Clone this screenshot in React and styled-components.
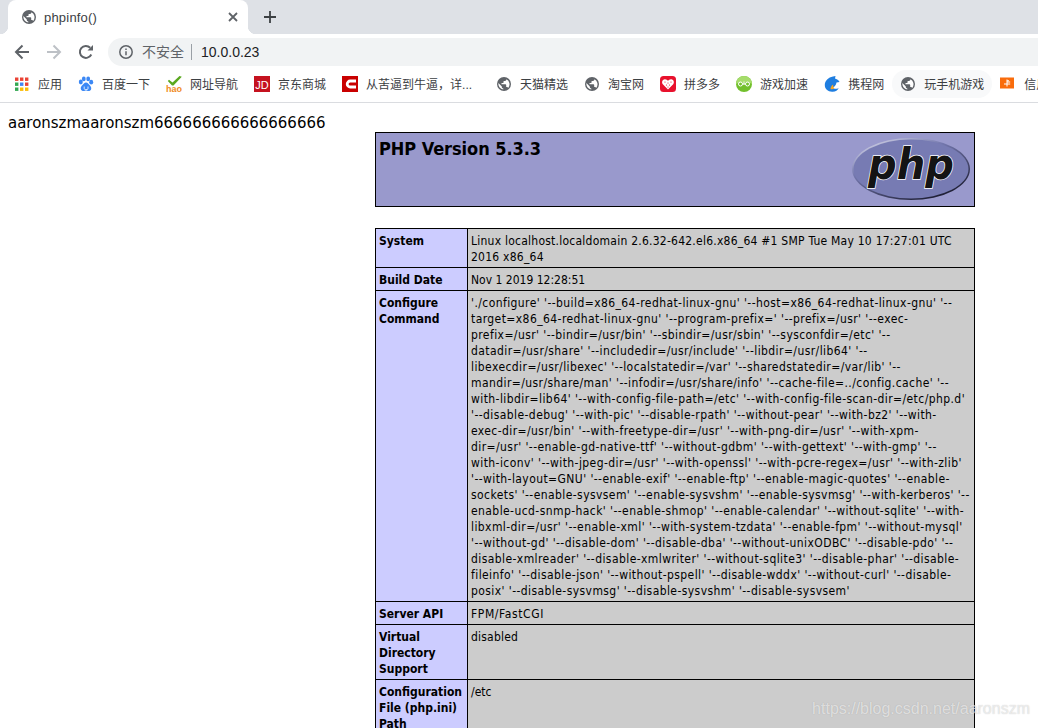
import React from "react";
import styled, { createGlobalStyle } from "styled-components";

const Global = createGlobalStyle`
  html, body { margin: 0; padding: 0; background: #fff; }
  * { box-sizing: border-box; }
`;

const Window = styled.div`
  position: relative;
  width: 1038px;
  height: 728px;
  overflow: hidden;
  background: #fff;
  font-family: "Liberation Sans", "Noto Sans CJK SC", sans-serif;
`;

const TabStrip = styled.div`
  display: flex;
  align-items: flex-start;
  height: 34px;
  padding-left: 8px;
  background: #dee1e6;
`;

const Tab = styled.div`
  position: relative;
  display: flex;
  align-items: center;
  width: 240px;
  height: 34px;
  padding: 0 9px 0 13px;
  background: #fff;
  border-radius: 8px 8px 0 0;
  &::before, &::after {
    content: "";
    position: absolute;
    bottom: 0;
    width: 8px;
    height: 8px;
  }
  &::before { left: -8px; background: radial-gradient(circle at 0 0, transparent 8px, #fff 8.5px); }
  &::after { right: -8px; background: radial-gradient(circle at 100% 0, transparent 8px, #fff 8.5px); }
`;

const TabTitle = styled.span`
  flex: 1;
  margin-left: 7px;
  font-size: 13px;
  letter-spacing: 0.2px;
  color: #3c4043;
`;

const NewTab = styled.div`
  display: flex;
  margin: 9px 0 0 14px;
`;

const Toolbar = styled.div`
  display: flex;
  align-items: flex-end;
  height: 32px;
  padding-left: 14px;
`;

const NavButton = styled.div`
  display: flex;
  align-items: center;
  justify-content: center;
  width: 16px;
  height: 28px;
  margin-right: ${(p) => p.$gap}px;
`;

const Omnibox = styled.div`
  flex: 1;
  display: flex;
  align-items: center;
  height: 28px;
  padding-left: 10px;
  background: #f1f3f4;
  border-radius: 14px 0 0 14px;
`;

const Insecure = styled.span`
  margin-left: 8px;
  padding-bottom: 2px;
  font-size: 14px;
  color: #5f6368;
`;

const Divider = styled.span`
  width: 1px;
  height: 16px;
  margin: 0 9px 0 7px;
  background: #9aa0a6;
`;

const Url = styled.span`
  font-size: 14px;
  color: #202124;
`;

const BookmarkBar = styled.div`
  display: flex;
  align-items: center;
  height: 37px;
  padding-left: 6px;
  border-bottom: 1px solid #dadce0;
  white-space: nowrap;
`;

const Bookmark = styled.div`
  flex: none;
  display: flex;
  align-items: center;
  gap: 8px;
  height: 28px;
  padding: 0 8px;
  border-radius: 14px;
  background: ${(p) => (p.$hover ? "#f8f9fa" : "transparent")};
`;

const BookmarkLabel = styled.span`
  padding-bottom: 2px;
  font-size: 12px;
  color: #3c4043;
  ${(p) => (p.$width ? `width: ${p.$width}px; overflow: hidden;` : "")}
`;

const Content = styled.div`
  display: flex;
  align-items: flex-start;
`;

const Greeting = styled.div`
  flex: none;
  width: 375px;
  padding: 11px 0 0 8px;
  font-family: "DejaVu Sans Condensed", "DejaVu Sans", sans-serif;
  font-size: 16.65px;
  line-height: 18px;
  color: #000;
`;

const PhpInfo = styled.div`
  flex: none;
  width: 600px;
  padding-top: 29px;
  font-family: "DejaVu Sans Condensed", "DejaVu Sans", sans-serif;
  font-size: 12px;
  line-height: 16px;
  color: #000;
`;

const InfoTable = styled.table`
  width: 600px;
  table-layout: fixed;
  border-collapse: collapse;
  margin-bottom: ${(p) => p.$after || 0}px;
`;

const Banner = styled.td`
  height: 74px;
  padding: 0 3px;
  background: #9999cc;
  border: 1px solid #000;
  vertical-align: top;
`;

const BannerInner = styled.div`
  display: flex;
  justify-content: space-between;
`;

const Title = styled.h1`
  margin: 3px 0 0;
  font-size: 18px;
  line-height: 26px;
  font-weight: 700;
  letter-spacing: -0.06px;
`;

const LogoWrap = styled.div`
  display: flex;
  margin-top: 4px;
`;

const Label = styled.td`
  width: 92px;
  padding: 4px 3px 2px;
  background: #ccccff;
  border: 1px solid #000;
  font-weight: 700;
  vertical-align: top;
`;

const Value = styled.td`
  padding: 4px 3px 2px 3px;
  background: #cccccc;
  border: 1px solid #000;
  vertical-align: top;
  white-space: nowrap;
  overflow: hidden;
  letter-spacing: ${(p) => p.$track}px;
`;

const Watermark = styled.div`
  position: absolute;
  right: 8px;
  bottom: 9px;
  font-family: "Liberation Sans", sans-serif;
  font-size: 16px;
  line-height: 20px;
  color: rgba(255, 255, 255, 0.62);
  text-shadow: 0 0 1px rgba(120, 120, 120, 0.45);
`;

const Icon16 = ({ children, w = 16, h = 16 }) => (
  <svg width={w} height={h} viewBox="0 0 16 16" style={{ flex: "none", display: "block" }}>{children}</svg>
);

const Globe = ({ size = 16 }) => (
  <Icon16 w={size} h={size}>
    <circle cx="8" cy="8" r="7" fill="#5f6368" />
    <path d="M7.3 13.6A5.7 5.7 0 0 1 2.4 7L5.8 10.400v.7c0 .8.6 1.300 1.500 1.400z" fill="#fff" />
    <path d="M12.200 11.900c-.2-.5-.7-.9-1.300-.9h-.7V9c0-.4-.3-.7-.7-.7H5.500V7h1.400c.4 0 .7-.3.7-.7V4.900h1.400c.8 0 1.400-.6 1.400-1.400V3.200a5.700 5.700 0 0 1 1.800 8.700z" fill="#fff" />
  </Icon16>
);

const Apps = () => {
  const colors = ["#ea4335", "#ea4335", "#ea4335", "#34a853", "#4285f4", "#ea4335", "#34a853", "#fbbc05", "#fbbc05"];
  return (
    <Icon16>
      {colors.map((c, i) => (
        <rect key={i} x={1 + (i % 3) * 5} y={1.500 + Math.floor(i / 3) * 5} width="3.400" height="3.400" fill={c} />
      ))}
    </Icon16>
  );
};

const Baidu = () => (
  <Icon16>
    <g fill="#3b88f5">
      <ellipse cx="2.800" cy="6" rx="2" ry="2.400" />
      <ellipse cx="5.800" cy="2.900" rx="1.900" ry="2.300" />
      <ellipse cx="10.200" cy="2.900" rx="1.900" ry="2.300" />
      <ellipse cx="13.200" cy="6.200" rx="2" ry="2.400" />
      <path d="M8 6.500c-1.800 0-2.500 1.500-3.500 2.500S2.400 11 2.800 13c.4 1.800 2.400 2.300 3.600 1.900.6-.2 1-.3 1.600-.3s1 .1 1.600.3c1.300.4 3.200-.1 3.600-1.900.4-2-.8-3-1.700-4S9.800 6.500 8 6.500z" />
    </g>
    <path d="M6.200 10.500v2c0 .7.500 1 1 1h1.800c.6 0 1-.3 1-1v-2" fill="none" stroke="#fff" strokeWidth=".8" />
  </Icon16>
);

const Hao = () => (
  <Icon16>
    <path d="M3 3.800 6.500 6.500 13.500 0 15.800 .8 7.500 9.500 6 9.500 1.800 5z" fill="#5aa81f" />
    <text x="0" y="15.500" fontFamily="'Liberation Sans', sans-serif" fontSize="8.500" fontWeight="700" fill="#f08a24" textLength="16" lengthAdjust="spacingAndGlyphs">hao</text>
  </Icon16>
);

const JD = () => (
  <Icon16>
    <rect width="16" height="16" fill="#c5121f" />
    <text x="8" y="12.500" textAnchor="middle" fontFamily="'Liberation Sans', sans-serif" fontSize="11" fill="#fff">JD</text>
  </Icon16>
);

const Csdn = () => (
  <Icon16>
    <rect width="16" height="16" fill="#c90000" />
    <path d="M14 5H8.200a3 3 0 0 0 0 6h5.800" fill="none" stroke="#fff" strokeWidth="2.800" />
  </Icon16>
);

const Pdd = () => (
  <Icon16>
    <rect width="16" height="16" rx="3.500" fill="#e8112d" />
    <path d="M8 13.500 2.800 8.300C1.500 6.800 2 3.600 4.800 3.300 6.200 3.200 7.400 4 8 5c.6-1 1.800-1.800 3.200-1.700 2.800.3 3.300 3.500 2 5z" fill="#fff" />
    <g fill="#e8112d">
      <circle cx="5" cy="6" r=".6" /><circle cx="8" cy="7" r=".6" /><circle cx="11" cy="6" r=".6" />
      <circle cx="6.500" cy="9" r=".6" /><circle cx="9.500" cy="9" r=".6" /><circle cx="8" cy="11" r=".6" />
    </g>
  </Icon16>
);

const Game = () => (
  <Icon16>
    <circle cx="8" cy="8" r="8" fill="#72c02c" />
    <path d="M0 8a8 8 0 0 1 16 0c-2-2-13-2-16 0z" fill="#a5dc6b" />
    <g fill="none" stroke="#fff" strokeWidth="1">
      <circle cx="4.500" cy="8" r="2" /><circle cx="11.500" cy="8" r="2" />
      <path d="M6.500 8h3M8 5.500v3" />
    </g>
  </Icon16>
);

const Ctrip = () => (
  <Icon16>
    <path d="M9 .5 11.500 0 11 2.500c2.500 1 4 2 4.500 3.500l-3 .5c-.5 2.500-1.500 4-3.800 5 .8 1 1.800 1.400 4 1.200.8-.1 1.500-.4 2-1-.8 2.500-3.200 4-6 4C4 16 .8 13 .8 9c0-4 3.600-7.700 8.200-8.500z" fill="#1f7ee0" />
    <path d="M6.500 13c.2-2 1-3.500 2.700-4.500-.2 2 .3 3.200 1.300 4-1.500.8-2.800.9-4 .5z" fill="#f6a623" />
  </Icon16>
);

const Card = () => (
  <Icon16>
    <rect y="1.500" width="14" height="11" fill="#f96c0c" />
    <path d="M7 3.500v7M7 6h3.200M4 8h6.200M7 4.800h2" stroke="#fff" strokeWidth="1" fill="none" />
  </Icon16>
);

const PhpLogo = () => (
  <svg width="120" height="64" viewBox="0 0 120 64" style={{ display: "block" }}>
    <defs>
      <linearGradient id="rim" x1="0.150" y1="0" x2="0.850" y2="1">
        <stop offset="0" stopColor="#d8d9ea" />
        <stop offset="0.350" stopColor="#7377ad" />
        <stop offset="1" stopColor="#111122" />
      </linearGradient>
    </defs>
    <ellipse cx="60" cy="32" rx="59" ry="31" fill="url(#rim)" />
    <ellipse cx="60" cy="32" rx="57.500" ry="29.500" fill="#777bb3" />
    <text
      x="60"
      y="42"
      textAnchor="middle"
      fontFamily="'DejaVu Sans', sans-serif"
      fontSize="42"
      fontWeight="700"
      fontStyle="italic"
      fill="#141414"
      stroke="#fff"
      strokeWidth="1.500"
      paintOrder="stroke"
      textLength="86"
      lengthAdjust="spacingAndGlyphs"
    >
      php
    </text>
  </svg>
);

const BOOKMARKS = [
  { icon: <Apps />, label: "应用" },
  { icon: <Baidu />, label: "百度一下" },
  { icon: <Hao />, label: "网址导航" },
  { icon: <JD />, label: "京东商城" },
  { icon: <Csdn />, label: "从苦逼到牛逼，详...", width: 114 },
  { icon: <Globe />, label: "天猫精选" },
  { icon: <Globe />, label: "淘宝网" },
  { icon: <Pdd />, label: "拼多多" },
  { icon: <Game />, label: "游戏加速" },
  { icon: <Ctrip />, label: "携程网" },
  { icon: <Globe />, label: "玩手机游戏", hover: true },
  { icon: <Card />, label: "信用卡" },
];

const CONFIGURE = [
  "'./configure' '--build=x86_64-redhat-linux-gnu' '--host=x86_64-redhat-linux-gnu' '--",
  "target=x86_64-redhat-linux-gnu' '--program-prefix=' '--prefix=/usr' '--exec-",
  "prefix=/usr' '--bindir=/usr/bin' '--sbindir=/usr/sbin' '--sysconfdir=/etc' '--",
  "datadir=/usr/share' '--includedir=/usr/include' '--libdir=/usr/lib64' '--",
  "libexecdir=/usr/libexec' '--localstatedir=/var' '--sharedstatedir=/var/lib' '--",
  "mandir=/usr/share/man' '--infodir=/usr/share/info' '--cache-file=../config.cache' '--",
  "with-libdir=lib64' '--with-config-file-path=/etc' '--with-config-file-scan-dir=/etc/php.d'",
  "'--disable-debug' '--with-pic' '--disable-rpath' '--without-pear' '--with-bz2' '--with-",
  "exec-dir=/usr/bin' '--with-freetype-dir=/usr' '--with-png-dir=/usr' '--with-xpm-",
  "dir=/usr' '--enable-gd-native-ttf' '--without-gdbm' '--with-gettext' '--with-gmp' '--",
  "with-iconv' '--with-jpeg-dir=/usr' '--with-openssl' '--with-pcre-regex=/usr' '--with-zlib'",
  "'--with-layout=GNU' '--enable-exif' '--enable-ftp' '--enable-magic-quotes' '--enable-",
  "sockets' '--enable-sysvsem' '--enable-sysvshm' '--enable-sysvmsg' '--with-kerberos' '--",
  "enable-ucd-snmp-hack' '--enable-shmop' '--enable-calendar' '--without-sqlite' '--with-",
  "libxml-dir=/usr' '--enable-xml' '--with-system-tzdata' '--enable-fpm' '--without-mysql'",
  "'--without-gd' '--disable-dom' '--disable-dba' '--without-unixODBC' '--disable-pdo' '--",
  "disable-xmlreader' '--disable-xmlwriter' '--without-sqlite3' '--disable-phar' '--disable-",
  "fileinfo' '--disable-json' '--without-pspell' '--disable-wddx' '--without-curl' '--disable-",
  "posix' '--disable-sysvmsg' '--disable-sysvshm' '--disable-sysvsem'",
];

const ROWS = [
  { label: ["System"], track: 0.24, value: ["Linux localhost.localdomain 2.6.32-642.el6.x86_64 #1 SMP Tue May 10 17:27:01 UTC", "2016 x86_64"] },
  { label: ["Build Date"], track: 0, value: ["Nov 1 2019 12:28:51"] },
  { label: ["Configure", "Command"], track: 0.42, value: CONFIGURE },
  { label: ["Server API"], track: 0.6, value: ["FPM/FastCGI"] },
  { label: ["Virtual", "Directory", "Support"], track: 0.2, value: ["disabled"] },
  { label: ["Configuration", "File (php.ini)", "Path"], track: 0, value: ["/etc"] },
];

const Lines = ({ lines }) =>
  lines.map((line, i) => (
    <React.Fragment key={i}>
      {i > 0 && <br />}
      {line}
    </React.Fragment>
  ));

export default function App() {
  return (
    <Window>
      <Global />
      <TabStrip>
        <Tab>
          <Globe />
          <TabTitle>phpinfo()</TabTitle>
          <svg width="12" height="12" viewBox="0 0 12 12">
            <path d="M2 2l8 8M10 2l-8 8" stroke="#5f6368" strokeWidth="1.800" />
          </svg>
        </Tab>
        <NewTab>
          <svg width="16" height="16" viewBox="0 0 16 16">
            <path d="M8 2v12M2 8h12" stroke="#3c4043" strokeWidth="1.800" />
          </svg>
        </NewTab>
      </TabStrip>
      <Toolbar>
        <NavButton $gap={16}>
          <svg width="16" height="16" viewBox="0 0 16 16">
            <path d="M15 8H2.500M8.500 1.500 2 8l6.500 6.500" fill="none" stroke="#5f6368" strokeWidth="2" />
          </svg>
        </NavButton>
        <NavButton $gap={16}>
          <svg width="16" height="16" viewBox="0 0 16 16">
            <path d="M1 8h12.500M7.500 1.500 14 8l-6.500 6.500" fill="none" stroke="#bdc1c6" strokeWidth="2" />
          </svg>
        </NavButton>
        <NavButton $gap={14}>
          <svg width="16" height="16" viewBox="0 0 16 16">
            <path d="M13.300 10.500A6 6 0 1 1 12.200 3.700" fill="none" stroke="#5f6368" strokeWidth="2" />
            <path d="M9.500 6.500H15V1z" fill="#5f6368" />
          </svg>
        </NavButton>
        <Omnibox>
          <svg width="16" height="16" viewBox="0 0 16 16" style={{ flex: "none" }}>
            <circle cx="8" cy="8" r="6.200" fill="none" stroke="#5f6368" strokeWidth="1.500" />
            <path d="M8 7.200v4M8 4.500v1.500" stroke="#5f6368" strokeWidth="1.500" />
          </svg>
          <Insecure>不安全</Insecure>
          <Divider />
          <Url>10.0.0.23</Url>
        </Omnibox>
      </Toolbar>
      <BookmarkBar>
        {BOOKMARKS.map((b) => (
          <Bookmark key={b.label} $hover={b.hover}>
            {b.icon}
            <BookmarkLabel $width={b.width}>{b.label}</BookmarkLabel>
          </Bookmark>
        ))}
      </BookmarkBar>
      <Content>
        <Greeting>aaronszmaaronszm666666666666666666</Greeting>
        <PhpInfo>
          <InfoTable $after={21}>
            <tbody>
              <tr>
                <Banner>
                  <BannerInner>
                    <Title>PHP Version 5.3.3</Title>
                    <LogoWrap>
                      <PhpLogo />
                    </LogoWrap>
                  </BannerInner>
                </Banner>
              </tr>
            </tbody>
          </InfoTable>
          <InfoTable>
            <tbody>
              {ROWS.map((r) => (
                <tr key={r.label[0]}>
                  <Label><Lines lines={r.label} /></Label>
                  <Value $track={r.track}><Lines lines={r.value} /></Value>
                </tr>
              ))}
            </tbody>
          </InfoTable>
        </PhpInfo>
      </Content>
      <Watermark>https://blog.csdn.net/aaronszm</Watermark>
    </Window>
  );
}
